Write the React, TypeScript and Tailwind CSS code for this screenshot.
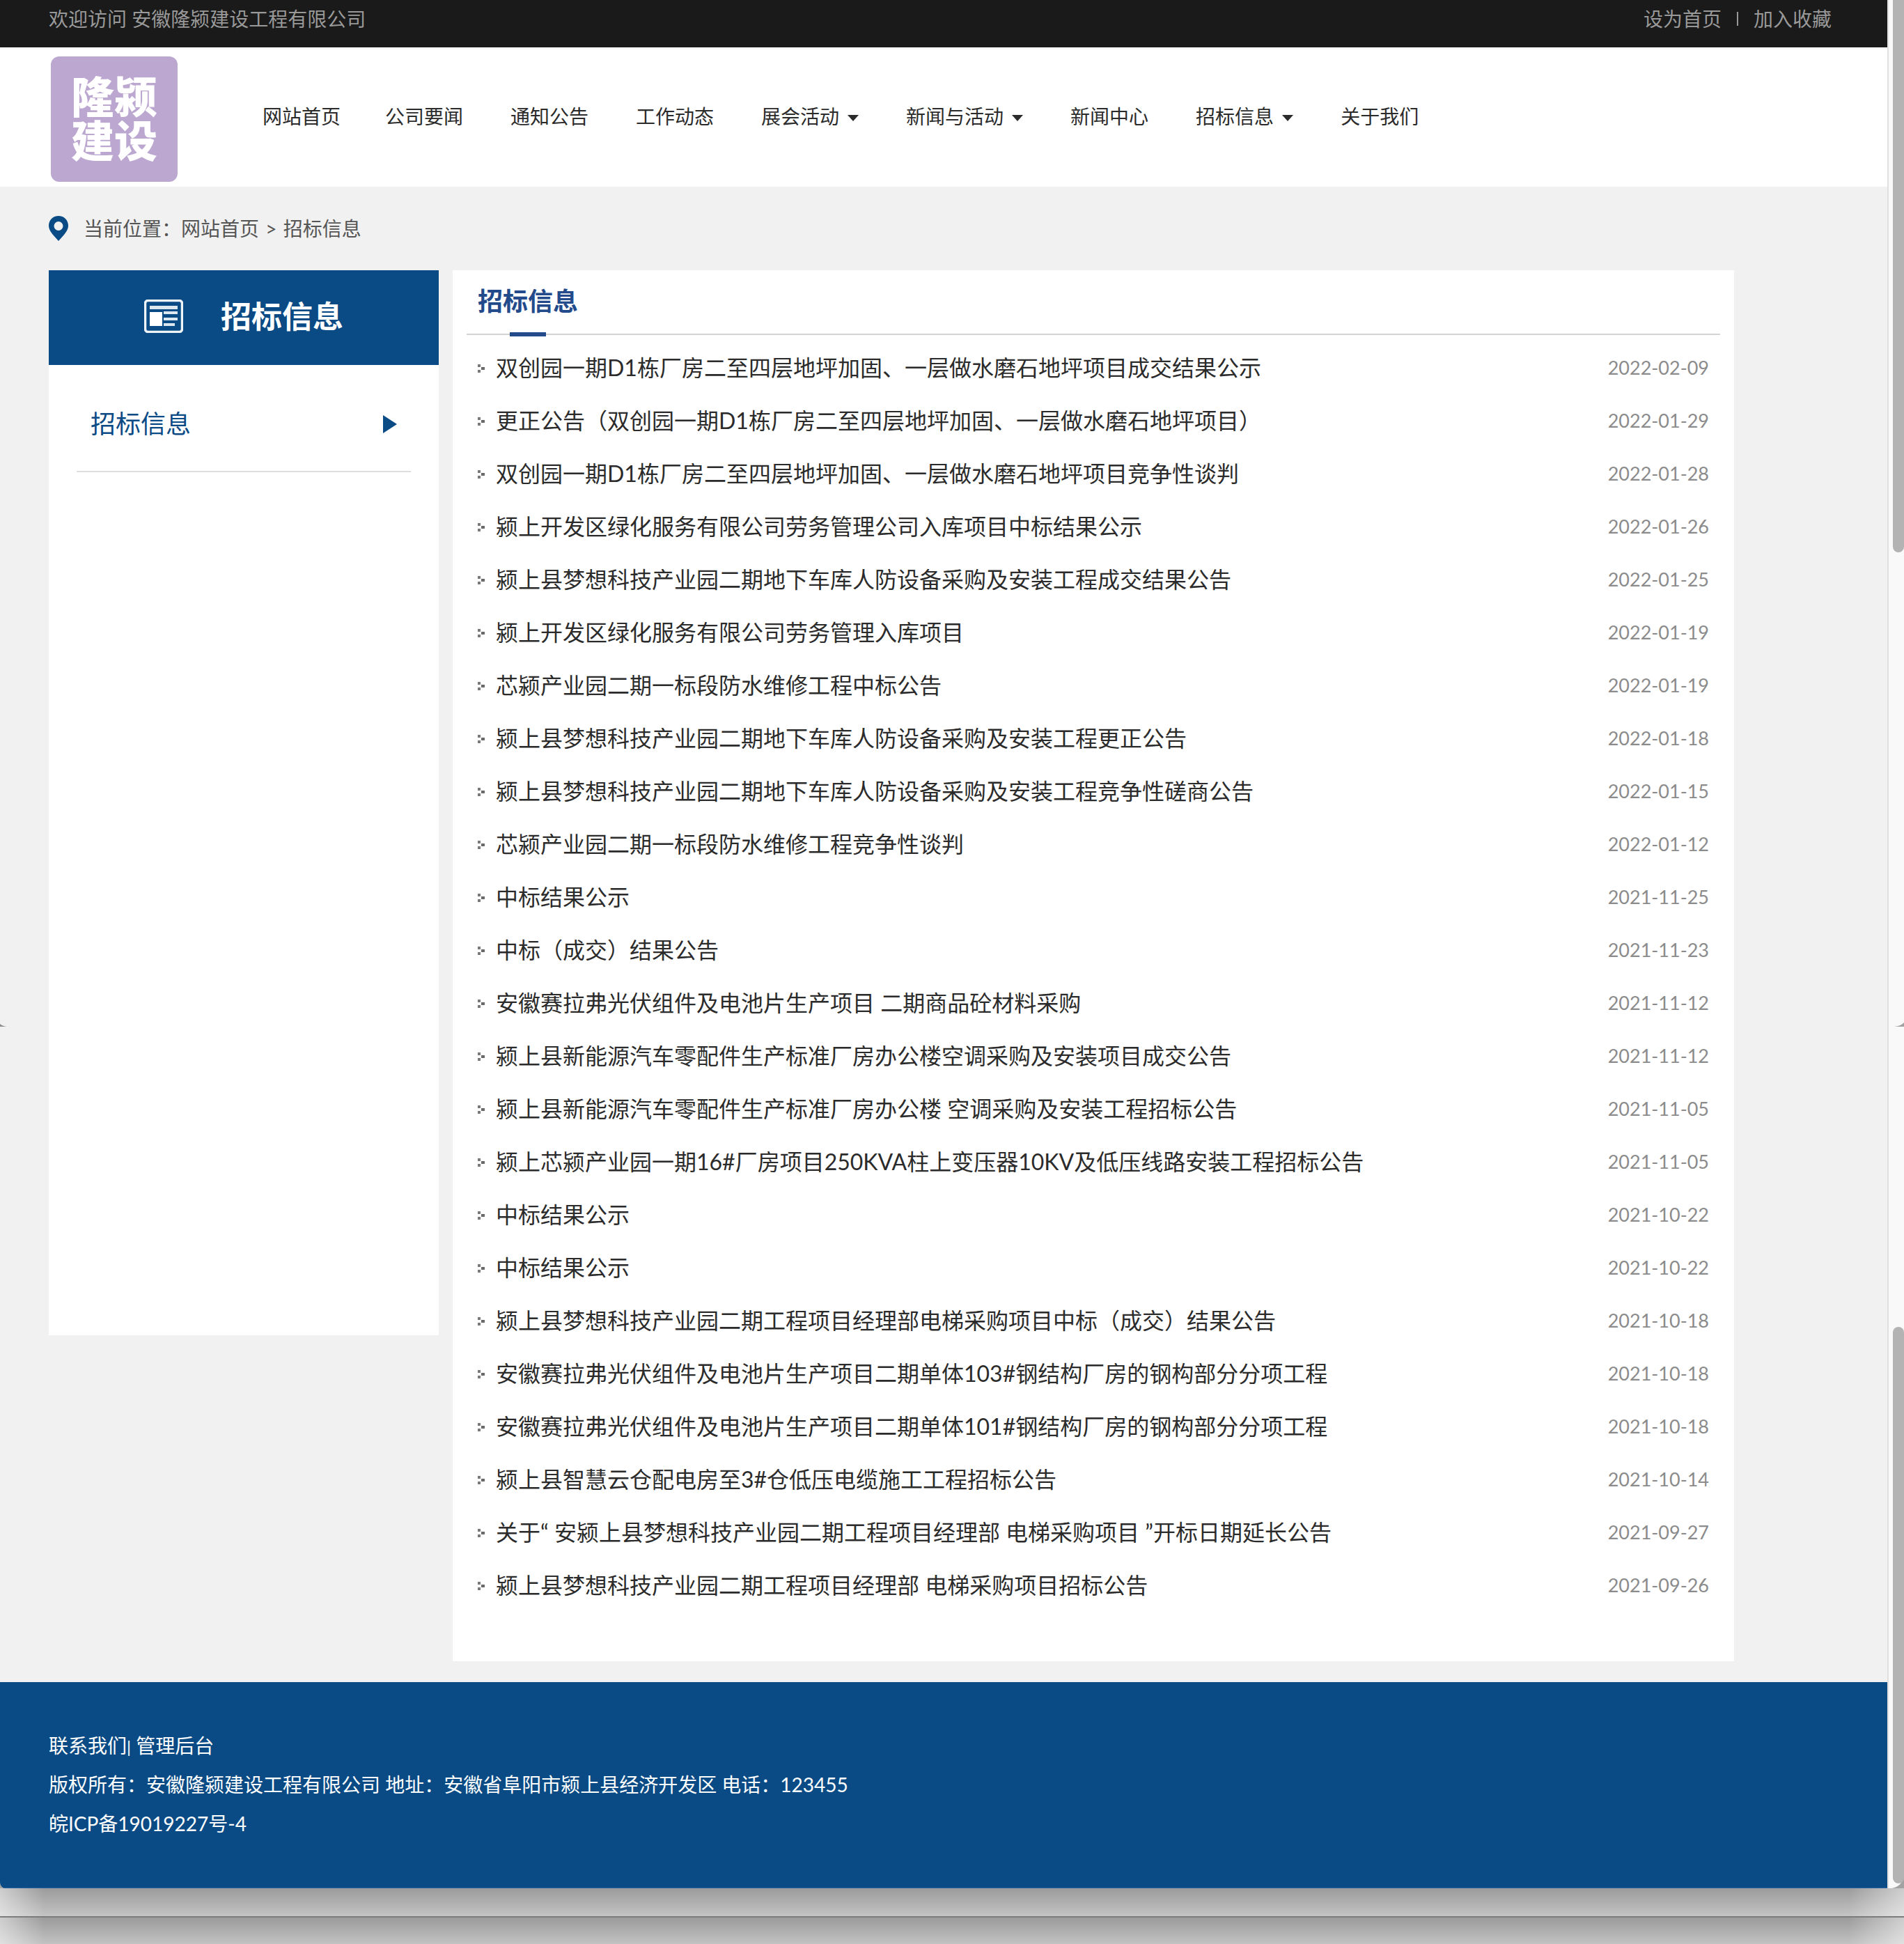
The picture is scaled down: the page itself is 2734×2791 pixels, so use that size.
import React from "react";

const navItems: { label: string; menu?: boolean }[] = [
  { label: "网站首页" },
  { label: "公司要闻" },
  { label: "通知公告" },
  { label: "工作动态" },
  { label: "展会活动", menu: true },
  { label: "新闻与活动", menu: true },
  { label: "新闻中心" },
  { label: "招标信息", menu: true },
  { label: "关于我们" },
];

const notices: [string, string][] = [
  ["双创园一期D1栋厂房二至四层地坪加固、一层做水磨石地坪项目成交结果公示", "2022-02-09"],
  ["更正公告（双创园一期D1栋厂房二至四层地坪加固、一层做水磨石地坪项目）", "2022-01-29"],
  ["双创园一期D1栋厂房二至四层地坪加固、一层做水磨石地坪项目竞争性谈判", "2022-01-28"],
  ["颍上开发区绿化服务有限公司劳务管理公司入库项目中标结果公示", "2022-01-26"],
  ["颍上县梦想科技产业园二期地下车库人防设备采购及安装工程成交结果公告", "2022-01-25"],
  ["颍上开发区绿化服务有限公司劳务管理入库项目", "2022-01-19"],
  ["芯颍产业园二期一标段防水维修工程中标公告", "2022-01-19"],
  ["颍上县梦想科技产业园二期地下车库人防设备采购及安装工程更正公告", "2022-01-18"],
  ["颍上县梦想科技产业园二期地下车库人防设备采购及安装工程竞争性磋商公告", "2022-01-15"],
  ["芯颍产业园二期一标段防水维修工程竞争性谈判", "2022-01-12"],
  ["中标结果公示", "2021-11-25"],
  ["中标（成交）结果公告", "2021-11-23"],
  ["安徽赛拉弗光伏组件及电池片生产项目 二期商品砼材料采购", "2021-11-12"],
  ["颍上县新能源汽车零配件生产标准厂房办公楼空调采购及安装项目成交公告", "2021-11-12"],
  ["颍上县新能源汽车零配件生产标准厂房办公楼 空调采购及安装工程招标公告", "2021-11-05"],
  ["颍上芯颍产业园一期16#厂房项目250KVA柱上变压器10KV及低压线路安装工程招标公告", "2021-11-05"],
  ["中标结果公示", "2021-10-22"],
  ["中标结果公示", "2021-10-22"],
  ["颍上县梦想科技产业园二期工程项目经理部电梯采购项目中标（成交）结果公告", "2021-10-18"],
  ["安徽赛拉弗光伏组件及电池片生产项目二期单体103#钢结构厂房的钢构部分分项工程", "2021-10-18"],
  ["安徽赛拉弗光伏组件及电池片生产项目二期单体101#钢结构厂房的钢构部分分项工程", "2021-10-18"],
  ["颍上县智慧云仓配电房至3#仓低压电缆施工工程招标公告", "2021-10-14"],
  ["关于“ 安颍上县梦想科技产业园二期工程项目经理部 电梯采购项目 ”开标日期延长公告", "2021-09-27"],
  ["颍上县梦想科技产业园二期工程项目经理部 电梯采购项目招标公告", "2021-09-26"],
];

function Logo() {
  return (
    <a
      href="#"
      className="flex h-[180px] w-[182px] items-center justify-center rounded-xl bg-[#bba7d0] text-[62px] leading-[63px] font-black text-white"
    >
      <span className="w-[124px] break-all">隆颍建设</span>
    </a>
  );
}

function Bullet() {
  return (
    <svg className="mt-0.5 h-3 w-[10px] shrink-0" viewBox="0 0 10 12" aria-hidden="true">
      <rect x="0" y="0" width="4" height="4" fill="#7a7a7a" />
      <rect x="5" y="4" width="5" height="4" fill="#6a6a6a" />
      <rect x="0" y="8" width="4" height="4" fill="#7a7a7a" />
    </svg>
  );
}

function NewsIcon() {
  return (
    <svg className="h-12 w-14" viewBox="0 0 56 48" aria-hidden="true">
      <rect x="1.5" y="1.5" width="53" height="45" rx="4" fill="none" stroke="#eef3f8" strokeWidth="3.500" />
      <rect x="8" y="9" width="40" height="5" fill="#dde7f0" />
      <rect x="8" y="18" width="18" height="20" fill="#fff" />
      <rect x="28" y="17" width="20" height="4" fill="#dde7f0" />
      <rect x="28" y="26" width="20" height="4" fill="#dde7f0" />
      <rect x="28" y="34" width="16" height="4" fill="#dde7f0" />
    </svg>
  );
}

function ScrollTrack() {
  return (
    <div className="flex w-6 shrink-0 flex-col justify-between rounded-br-[20px] border-l-2 border-[#e0e0e0] bg-[#f9f9f9] pb-[7px] pl-1.5">
      <div className="h-[793px] rounded-b-full bg-[#b3b3b3]" />
      <div className="h-[799px] rounded-full bg-[#b3b3b3]" />
    </div>
  );
}

function WindowShadow() {
  return (
    <div className="relative h-10 bg-linear-to-b from-[#9b9b9b] to-[#c4c4c4]">
      <div className="absolute inset-y-0 left-0 w-16 bg-linear-to-r from-white/50 to-transparent" />
      <div className="absolute inset-y-0 right-0 w-20 bg-linear-to-l from-white/50 to-transparent" />
    </div>
  );
}

export default function App() {
  return (
    <div className="relative bg-[#a2a2a2] font-['Lato','Noto_Sans_CJK_SC',sans-serif] text-[28px] leading-tight text-[#2b2b2b]">
      <div className="flex">
        <div className="min-w-0 flex-1 overflow-hidden rounded-bl-lg bg-[#f1f1f1]">
          <div className="flex justify-between bg-[#1a1a1a] pr-20 pb-[14px] pl-[70px] leading-[54px] text-[#999]">
            <p>欢迎访问 安徽隆颍建设工程有限公司</p>
            <p className="flex items-center">
              <a href="#">设为首页</a>
              <span className="mx-[22px] h-5 w-0.5 bg-[#999]" />
              <a href="#">加入收藏</a>
            </p>
          </div>

          <header className="flex items-start bg-white pt-[13px] pb-[7px] pl-[73px]">
            <Logo />
            <nav className="mt-[70px] ml-[122px] flex gap-[68px] leading-8">
              {navItems.map((item) => (
                <a key={item.label} href="#" className="flex items-center gap-3 first:-mr-1">
                  {item.label}
                  {item.menu && (
                    <svg className="mt-1 h-[9px] w-4" viewBox="0 0 16 9" aria-hidden="true">
                      <path d="M0 0h16L8 9z" fill="#2b2b2b" />
                    </svg>
                  )}
                </a>
              ))}
            </nav>
          </header>

          <div className="flex h-[120px] items-center pl-[70px] text-[#555]">
            <svg className="mr-[22px] h-9 w-7" viewBox="0 0 28 36" aria-hidden="true">
              <path
                fillRule="evenodd"
                fill="#0a4b85"
                d="M14 0C6 0 0 6 0 14c0 5 3 9 6 13l8 9 8-9c3-4 6-8 6-13C28 6 22 0 14 0zm0 8a6.500 6.500 0 1 1 0 13 6.500 6.500 0 0 1 0-13z"
              />
            </svg>
            <p>
              当前位置：<a href="#">网站首页</a> <span className="mx-0.5">&gt;</span> <a href="#">招标信息</a>
            </p>
          </div>

          <div className="flex items-start gap-5 pr-[220px] pb-[30px] pl-[70px]">
            <aside className="min-h-[1529px] w-[560px] shrink-0 bg-white text-[#0a4b85]">
              <h2 className="flex h-[136px] items-center justify-center gap-[54px] bg-[#0a4b85] pb-1 text-[44px] font-bold text-white">
                <NewsIcon />
                招标信息
              </h2>
              <a
                href="#"
                className="mx-10 mt-4 flex h-[138px] items-center justify-between border-b-2 border-[#ddd] px-5 text-4xl"
              >
                招标信息
                <svg className="mt-0.5 h-[26px] w-5" viewBox="0 0 20 26" aria-hidden="true">
                  <path d="M0 0l20 13L0 26z" fill="#0a4b85" />
                </svg>
              </a>
            </aside>

            <main className="min-w-0 flex-1 bg-white px-5 pb-[71px]">
              <div className="relative h-[93px] border-b-2 border-[#d3d3d3] pl-4">
                <h1 className="text-4xl leading-[88px] font-bold text-[#234b8b]">招标信息</h1>
                <span className="absolute -bottom-1 left-[62px] h-1.5 w-[52px] bg-[#234b8b]" />
              </div>
              <ul className="mt-[9px] px-4">
                {notices.map(([title, date], i) => (
                  <li key={i} className="flex h-[76px] items-center">
                    <Bullet />
                    <a href="#" className="ml-4 flex-1 truncate text-[32px]">
                      {title}
                    </a>
                    <time className="text-[27px] text-[#8b8b8b]">{date}</time>
                  </li>
                ))}
              </ul>
            </main>
          </div>

          <footer className="border-b border-[#2a62a0] bg-[#0a4b85] pt-[63px] pb-[64px] pl-[70px] leading-[56px] text-white">
            <p>
              <a href="#">联系我们</a>
              <span className="text-2xl">|</span> <a href="#">管理后台</a>
            </p>
            <p>版权所有：安徽隆颍建设工程有限公司 地址：安徽省阜阳市颍上县经济开发区 电话：123455</p>
            <p>皖ICP备19019227号-4</p>
          </footer>
        </div>
        <ScrollTrack />
      </div>

      <WindowShadow />
      <div className="border-t-2 border-[#7c7c7c]">
        <WindowShadow />
      </div>

      <svg className="absolute top-[1470px] left-0 h-1 w-2.5" viewBox="0 0 10 4" aria-hidden="true">
        <path d="M0 0q3 3 10 4H0z" fill="#8a8a8a" />
      </svg>
      <svg className="absolute top-[1468px] right-0 h-1.5 w-3.5" viewBox="0 0 14 6" aria-hidden="true">
        <path d="M14 0q-4 5-14 6h14z" fill="#a2a2a2" />
      </svg>
    </div>
  );
}
